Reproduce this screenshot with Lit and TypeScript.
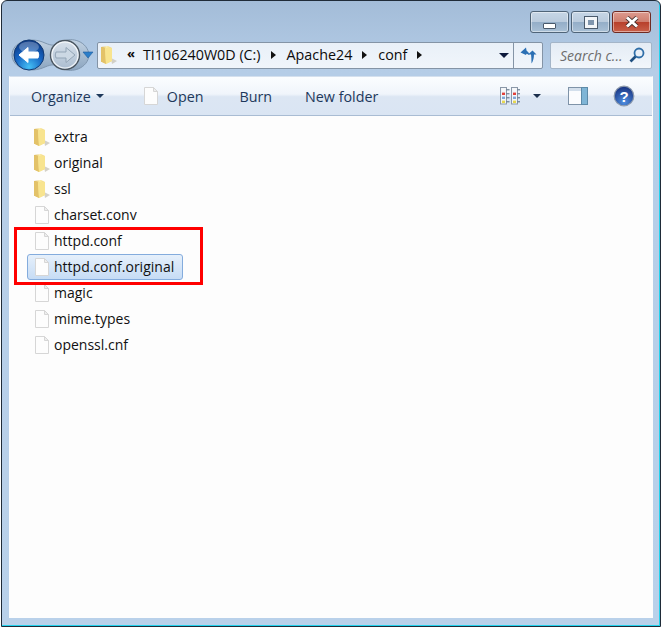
import { LitElement, html, css, svg } from "lit";
import { customElement } from "lit/decorators.js";

const FILES: [string, boolean][] = [
  ["extra", true], ["original", true], ["ssl", true], ["charset.conv", false],
  ["httpd.conf", false], ["httpd.conf.original", false], ["magic", false],
  ["mime.types", false], ["openssl.cnf", false],
];

const folderIcon = (id: string) => html`<svg width="18" height="20" viewBox="0 0 18 20">
  <defs><linearGradient id=${id} x1="0" x2="1" y1="0" y2="0">
    <stop offset="0" stop-color="#d2ab52"/><stop offset=".5" stop-color="#fbeca4"/><stop offset="1" stop-color="#efd47c"/></linearGradient></defs>
  <path d="M11 13 L17 16 L12 19 Z" fill="#c9c6ba" opacity=".8"/>
  <path d="M1 2 L8 1 L12 3 V16 L6 19 L1 16.5 Z" fill=${`url(#${id})`}/>
  <path d="M1 2 L5 3 L6 19 L1 16.5 Z" fill="#e3c268"/>
  <path d="M5 3 L12 3 V16 L6 19 Z" fill="#f8e48f"/>
</svg>`;

const fileIcon = html`<svg width="16" height="20" viewBox="0 0 16 20">
  <path d="M1.5 1.5 H10.5 L14.5 5.5 V18.5 H1.5 Z" fill="#fdfdfd" stroke="#d6d6d6"/>
  <path d="M10.5 1.5 V5.5 H14.5 Z" fill="#eeeeee" stroke="#d6d6d6"/>
</svg>`;

const cellColors = ["#f7f8fa", "#e2413a", "#7fa8d8", "#e6d84e"];

@customElement("app-root")
export class AppRoot extends LitElement {
  static styles = css`
    :host { display: block; width: 662px; height: 627px; position: relative; background: #fff; overflow: hidden;
      font-family: "Open Sans", "Liberation Sans", sans-serif; }
    .win { box-sizing: border-box; width: 660px; height: 627px; margin-left: 1px; border: 1px solid #1f2b38; border-radius: 6px 6px 0 0;
      box-shadow: inset -1px -1px 0 #22d3ee;
      background: linear-gradient(#a3bcd8 0, #b5cde7 70px, #b9d1ea 100%); padding: 0 7px 8px 7px; display: flex; flex-direction: column; }
    .title { padding-top: 10px; display: flex; justify-content: flex-end; gap: 2px; margin-right: 2px; flex: none; height: 22px; box-sizing: content-box; }
    .cap { width: 37px; height: 20px; border: 1px solid #4f6478; border-radius: 3px; box-shadow: inset 0 0 0 1px rgba(255,255,255,.45);
      background: linear-gradient(#c6d6e6 0, #bacbdd 48%, #94aec8 52%, #a9c0d6 100%); display: flex; align-items: center; justify-content: center; }
    .cap.close { border-color: #6f2a22; background: linear-gradient(#dd9a8e 0, #cf7f70 48%, #b8402c 52%, #c9604a 100%); }
    .minb { width: 11px; height: 4px; margin-top: 7px; background: #fff; border: 1px solid #4a5a6c; border-radius: 1px; }
    .maxb { width: 6px; height: 5px; border: 3px solid #f2f5f8; outline: 1px solid #4a5a6c; background: #7f95ad; }
    .nav { display: flex; align-items: center; height: 34px; margin-top: 5px; flex: none; }
    .navicons { width: 87px; margin-left: 1px; height: 34px; flex: none; }
    .addr { box-sizing: border-box; width: 446px; height: 27px; border: 1px solid #8494a6; border-radius: 2px; display: flex; align-items: center;
      background: linear-gradient(#e9f0f8, #f0f5fb); font-size: 14.3px; color: #0c0c0c; flex: none; }
    .fold { margin-left: 2px; width: 18px; height: 20px; flex: none; display: flex; }
    .chev { margin-left: 9px; width: 10px; font-size: 13px; font-weight: 700; line-height: 14px; margin-top: -4px; }
    .crumb { margin-left: 6px; margin-top: -2px; white-space: nowrap; }
    .arr { width: 0; height: 0; border-left: 5px solid #111; border-top: 4.5px solid transparent; border-bottom: 4.5px solid transparent; margin-left: 10px; flex: none; }
    .arr + .crumb { margin-left: 11px; }
    .spacer { flex: 1; }
    .ddown { width: 0; height: 0; border-top: 5px solid #0e1a3c; border-left: 5px solid transparent; border-right: 5px solid transparent; margin-right: 4px; }
    .refresh { width: 28px; height: 25px; border-left: 1px solid #8494a6; display: flex; align-items: center; justify-content: center; }
    .search { box-sizing: border-box; width: 102px; height: 27px; margin-left: 7px; flex: none; border: 1px solid #a4b5c8; border-radius: 2px;
      background: linear-gradient(#e4ecf5, #f2f6fb); display: flex; align-items: center; padding-left: 9px; font-size: 14px; font-style: italic; color: #6d6d6d; white-space: nowrap; justify-content: space-between; padding-right: 6px; }
    .main { flex: 1; margin-top: 4px; display: flex; flex-direction: column; border: solid #fdfdfd; border-width: 1px 1px 0; border-top-color: #d4e0ee; min-height: 0; }
    .tool { height: 38px; flex: none; background: linear-gradient(#fbfdff 0, #f0f5fb 45%, #dce6f3 52%, #dae5f3 100%); border-bottom: 1px solid #a9bcd3;
      display: flex; align-items: center; font-size: 14.3px; color: #1e395b; }
    .tool span { white-space: nowrap; }
    .caret { width: 0; height: 0; border-top: 4px solid #1e395b; border-left: 4px solid transparent; border-right: 4px solid transparent; }
    .list { flex: 1; background: #fdfdfd; padding: 8px 0 0 17px; position: relative; }
    .row { box-sizing: border-box; height: 26px; display: flex; align-items: center; width: max-content; min-width: 156px; padding-right: 7px; font-size: 14px; color: #111; border: 1px solid transparent; border-radius: 3px; }
    .ico { width: 18px; margin-left: 5px; margin-right: 3px; display: flex; justify-content: center; flex: none; }
    .name { margin-top: -2px; }
    .row.sel { border-color: #84acdd; background: linear-gradient(#e6f0fb, #c6dcf5); }
    .mark { position: absolute; left: 4px; top: 111px; width: 183px; height: 52px; border: 3px solid #f00; pointer-events: none; }
    .m21 { margin-left: 21px; } .m5 { margin-left: 5px; }
    .ficon { margin-left: 39px; display: flex; } .m8 { margin-left: 8px; } .m36 { margin-left: 36px; } .m33 { margin-left: 33px; }
    .view { margin-right: 13px; } .vcaret { margin-right: 27px; border-top-color: #1b2f4c; } .pane { margin-right: 25px; } .help { margin-right: 17px; }
  `;

  render() {
    return html`<div class="win">
      <div class="title">
        <div class="cap"><div class="minb"></div></div>
        <div class="cap"><div class="maxb"></div></div>
        <div class="cap close"><svg width="16" height="12" viewBox="0 0 16 12"><path d="M3 1.5 L13 10.5 M13 1.5 L3 10.5" stroke="#3d2a28" stroke-width="4.4"/><path d="M3 1.5 L13 10.5 M13 1.5 L3 10.5" stroke="#fff" stroke-width="3"/></svg></div>
      </div>
      <div class="nav">
        <svg class="navicons" viewBox="0 0 87 34" width="87" height="34">
          <defs>
            <radialGradient id="bb" cx=".5" cy=".9" r=".85"><stop offset="0" stop-color="#45c0f5"/><stop offset=".55" stop-color="#1766c4"/><stop offset="1" stop-color="#0c3a86"/></radialGradient>
            <linearGradient id="gb" x1="0" x2="0" y1="0" y2="1"><stop offset="0" stop-color="#d9e2ec"/><stop offset="1" stop-color="#aabccf"/></linearGradient>
            <linearGradient id="cap" x1="0" x2="0" y1="0" y2="1"><stop offset="0" stop-color="#c2d2e2"/><stop offset="1" stop-color="#8ba5c0"/></linearGradient>
          </defs>
          <path d="M2 17 C2 4 20 -2 35 5 C42 8 46 8 52 4 C62 -2 78 4 79 17 C78 30 62 36 52 30 C46 26 42 26 35 29 C20 36 2 30 2 17 Z" fill="url(#cap)" stroke="#7f96ae"/>
          <circle cx="19" cy="17" r="15" fill="url(#bb)" stroke="#123a74"/>
          <ellipse cx="19" cy="9" rx="10" ry="5.5" fill="#fff" opacity=".28"/>
          <path d="M9 17 L18 9.5 V14 H28 Q29.5 17 28 20 H18 V24.5 Z" fill="#fff" stroke="#fff" stroke-linejoin="round"/>
          <circle cx="55" cy="17" r="14.5" fill="url(#gb)" stroke="#4b5660" stroke-width="1.4"/>
          <circle cx="55" cy="17" r="13" fill="none" stroke="#fff" stroke-width="1.2" opacity=".8"/>
          <path d="M65 17 L56 9.5 V14 H46 Q44.5 17 46 20 H56 V24.5 Z" fill="#ccd8e4" stroke="#93a5b6" stroke-linejoin="round"/>
          <path d="M73 14 H83 L78 20 Z" fill="#2b7ec9" stroke="#1f5d9e" stroke-width=".6"/>
        </svg>
        <div class="addr">
          <div class="fold">${folderIcon("fa")}</div>
          <span class="chev">«</span>
          <span class="crumb">TI106240W0D (C:)</span><i class="arr"></i>
          <span class="crumb">Apache24</span><i class="arr"></i>
          <span class="crumb">conf</span><i class="arr"></i>
          <span class="spacer"></span>
          <i class="ddown"></i>
          <div class="refresh"><svg width="17" height="17" viewBox="0 0 17 17">
            <path d="M0.5 5.5 L6 0.5 L6.5 3.5 Q9 5 9.5 8 L6.5 6.8 L6 8 Z" fill="#2a6fb4"/>
            <path d="M8 7.5 H16.5 L12.5 3.5 Z" fill="#2a6fb4"/>
            <path d="M11 7 H14 Q14 13 11.5 16.5 Q11.5 11 11 7 Z" fill="#2a6fb4"/>
          </svg></div>
        </div>
        <div class="search"><span>Search c...</span>
          <svg width="16" height="16" viewBox="0 0 16 16"><circle cx="10" cy="6" r="4.5" fill="none" stroke="#2f6ea8" stroke-width="1.8"/><path d="M6.5 9.5 L1.5 14.5" stroke="#1f4f80" stroke-width="2.6"/></svg>
        </div>
      </div>
      <div class="main">
        <div class="tool">
          <span class="m21">Organize</span>
          <i class="caret m5"></i>
          <span class="ficon">${fileIcon}</span>
          <span class="m8">Open</span>
          <span class="m36">Burn</span>
          <span class="m33">New folder</span>
          <span class="spacer"></span>
          <svg class="view" width="20" height="18" viewBox="0 0 20 18">
            ${[0, 1].map((c) => svg`
              <rect x=${0.5 + c * 11} y="0.5" width="6" height="16.5" fill="#f2f5f9" stroke="#8b98a8"/>
              ${cellColors.map((col, r) => svg`
                <rect x=${2 + c * 11} y=${1.6 + r * 4} width="3" height="2.4" fill=${col}/>
                <path d=${`M${6.5 + c * 11} ${2.8 + r * 4}h3`} stroke="#55687e" stroke-width="1"/>`)}`)}
          </svg>
          <i class="caret vcaret"></i>
          <svg class="pane" width="20" height="18" viewBox="0 0 20 18">
            <rect x=".5" y=".5" width="19" height="17" fill="#fbfcfe" stroke="#7f93a8"/>
            <rect x="1" y="1" width="13" height="3" fill="#d3dfec"/>
            <rect x="13.5" y=".5" width="6" height="17" fill="#7fb5d6" stroke="#5d8aa8"/>
          </svg>
          <svg class="help" width="22" height="22" viewBox="0 0 22 22">
            <defs><radialGradient id="hp" cx=".5" cy=".8" r=".8"><stop offset="0" stop-color="#4f8fe0"/><stop offset="1" stop-color="#16307f"/></radialGradient></defs>
            <circle cx="11" cy="11" r="9.8" fill="url(#hp)" stroke="#8d9aac" stroke-width="1.2"/>
            <text x="11" y="16.5" text-anchor="middle" font-size="15" font-weight="700" fill="#fff" font-family="Liberation Sans">?</text>
          </svg>
        </div>
        <div class="list">
          ${FILES.map(([n, f], i) => html`<div class="row ${n === "httpd.conf.original" ? "sel" : ""}">
            <span class="ico">${f ? folderIcon("f" + i) : fileIcon}</span><span class="name">${n}</span></div>`)}
          <div class="mark"></div>
        </div>
      </div>
    </div>`;
  }
}
